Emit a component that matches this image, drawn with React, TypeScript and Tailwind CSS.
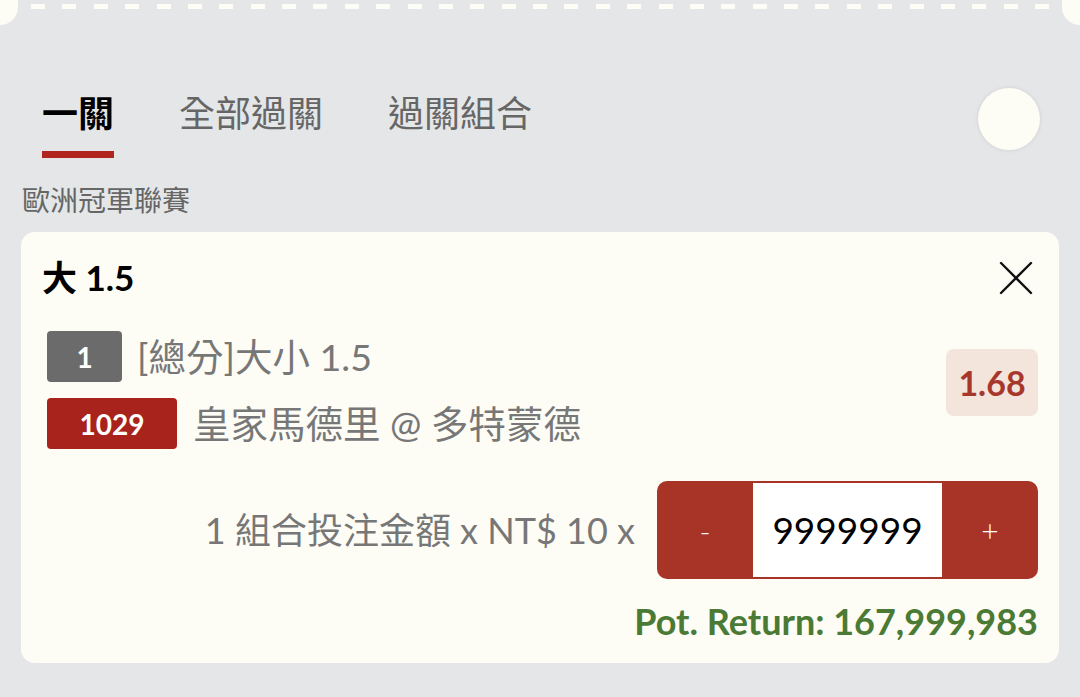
import React from "react";

const font = "font-[Lato,'Noto_Sans_CJK_TC',sans-serif]";

const dashes = Array.from({ length: 33 });

function TicketEdge() {
  return (
    <div className="flex h-[25px] items-start">
      <div className="h-[25px] w-[18px] rounded-br-[18px] bg-[#fdfcf5]" />
      <div className="mt-[4px] flex flex-1 justify-between px-[13px]">
        {dashes.map((_, i) => (
          <div key={i} className="h-[5px] w-[14px] bg-[#fdfcf5]" />
        ))}
      </div>
      <div className="h-[25px] w-[18px] rounded-bl-[18px] bg-[#fdfcf5]" />
    </div>
  );
}

function Tabs() {
  const tabs = ["一關", "全部過關", "過關組合"];
  return (
    <div className="mt-[70px] flex items-start pl-[42px] pr-[40px]">
      <div className="flex gap-[65px]">
        {tabs.map((t, i) => (
          <div key={t} className="flex flex-col">
            <span
              className={
                i === 0
                  ? "text-[36px] leading-[36px] font-bold text-black"
                  : "text-[36px] leading-[36px] text-[#666666]"
              }
            >
              {t}
            </span>
            {i === 0 && <div className="mt-[20px] h-[7px] bg-[#b0261e]" />}
          </div>
        ))}
      </div>
      <div className="ml-auto -mt-[7px] h-[62px] w-[62px] rounded-full bg-[#fdfcf5] shadow-[0_0_4px_rgba(0,0,0,0.1)]" />
    </div>
  );
}

function CloseIcon() {
  return (
    <svg width="34" height="34" viewBox="0 0 34 34" fill="none" stroke="#111" strokeWidth="2.4" strokeLinecap="round">
      <path d="M2 2 L32 32" />
      <path d="M32 2 L2 32" />
    </svg>
  );
}

export default function App() {
  return (
    <div className={`${font} h-[697px] w-[1080px] overflow-hidden bg-[#e5e6e8]`}>
      <TicketEdge />
      <Tabs />
      <div className="mt-[28px] pl-[22px] text-[28px] leading-[28px] text-[#666666]">歐洲冠軍聯賽</div>

      <div className="mx-[21px] mt-[18px] h-[431px] rounded-[14px] bg-[#fdfcf5] px-[21px] pt-[27px]">
        <div className="flex h-[36px] items-center justify-between">
          <span className="text-[35px] leading-[36px] font-bold text-black">大 1.5</span>
          <div className="mr-[5px] mt-[2px]">
            <CloseIcon />
          </div>
        </div>

        <div className="mt-[36px] flex items-start pl-[5px]">
          <div className="flex flex-col gap-[16px]">
            <div className="flex items-center gap-[15px]">
              <div className="flex h-[51px] w-[75px] items-center justify-center rounded-[4px] bg-[#6b6b6b] text-[28px] font-bold text-white">
                1
              </div>
              <span className="text-[37.5px] leading-[40px] text-[#777777]">[總分]大小 1.5</span>
            </div>
            <div className="flex items-center gap-[16px]">
              <div className="flex h-[51px] w-[130px] items-center justify-center rounded-[4px] bg-[#a8231b] text-[28px] font-bold text-white">
                1029
              </div>
              <span className="text-[37.5px] leading-[40px] text-[#777777]">皇家馬德里 @ 多特蒙德</span>
            </div>
          </div>
          <div className="ml-auto mt-[18px] flex h-[67px] w-[92px] items-center justify-center rounded-[8px] bg-[#f3e4dc] text-[34px] font-bold text-[#a8372b]">
            1.68
          </div>
        </div>

        <div className="mt-[32px] flex items-center justify-end gap-[22px]">
          <span className="text-[36px] leading-[40px] text-[#777777]">1 組合投注金額 x NT$ 10 x</span>
          <div className="flex h-[98px] w-[381px] items-center rounded-[10px] bg-[#a83428]">
            <div className="flex h-full w-[96px] items-center justify-center text-[30px] font-light text-white">-</div>
            <div className="flex h-[94px] w-[189px] items-center justify-center bg-white text-[37px] text-black">
              9999999
            </div>
            <div className="flex h-full w-[96px] items-center justify-center text-[30px] font-light text-white">+</div>
          </div>
        </div>

        <div className="mt-[24px] text-right text-[36px] leading-[36px] font-bold text-[#4b7a34]">
          Pot. Return: 167,999,983
        </div>
      </div>
    </div>
  );
}
